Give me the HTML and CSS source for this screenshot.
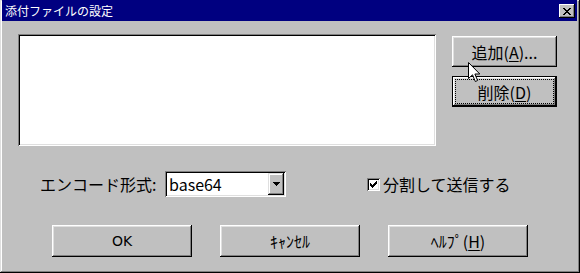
FILE: index.html
```html
<!DOCTYPE html>
<html lang="ja">
<head>
    <meta charset="UTF-8">
    <title>添付ファイルの設定</title>
    <link rel="stylesheet" href="styles.css">
</head>
<body>
    <div class="window">
        <div class="titlebar">
            <span class="title">添付ファイルの設定</span>
            <span class="close">
                <svg width="8" height="7" viewBox="0 0 8 7">
                    <path d="M0 0h2v1h1v1h2v-1h1v-1h2v1h-1v1h-1v1h-1v1h1v1h1v1h1v1h-2v-1h-1v-1h-2v1h-1v1h-2v-1h1v-1h1v-1h1v-1h-1v-1h-1v-1h-1z" fill="#000"/>
                </svg>
            </span>
        </div>

        <div class="content">
            <div class="top-row">
                <div class="listbox"></div>
                <div class="side-buttons">
                    <button class="btn side">追加(<u>A</u>)...</button>
                    <button class="btn side default"><span class="focus">削除(<u>D</u>)</span></button>
                </div>
            </div>

            <div class="option-row">
                <span class="enc-label">エンコード形式:</span>
                <div class="combo">
                    <span class="combo-value">base64</span>
                    <span class="combo-arrow">
                        <svg width="7" height="4" viewBox="0 0 7 4">
                            <path d="M0 0h7v1h-1v1h-1v1h-1v1h-1v-1h-1v-1h-1v-1h-1z" fill="#000"/>
                        </svg>
                    </span>
                </div>
                <span class="check">
                    <span class="checkbox">
                        <svg width="7" height="7" viewBox="0 0 7 7">
                            <path d="M6 0h1v3h-1v1h-1v1h-1v1h-1v1h-1v-1h-1v-1h-1v-3h1v1h1v1h1v-1h1v-1h1v-1h1z" fill="#000"/>
                        </svg>
                    </span>
                    分割して送信する
                </span>
            </div>

            <div class="bottom-row">
                <button class="btn wide latin">OK</button>
                <button class="btn wide">ｷｬﾝｾﾙ</button>
                <button class="btn wide">ﾍﾙﾌﾟ(<u>H</u>)</button>
            </div>
        </div>

        <svg class="cursor" width="13" height="21" viewBox="0 0 13 21">
            <path d="M0.5 0.5 L0.5 16.5 L4.5 12.8 L7.3 19.5 L9.6 18.5 L6.9 12 L11.8 12 Z" fill="#fff" stroke="#000" stroke-width="1"/>
        </svg>
    </div>
</body>
</html>
```

FILE: styles.css
```css
body {
    margin: 0;
    background: #c0c0c0;
    font-family: "Noto Sans CJK JP", "DejaVu Sans", sans-serif;
    font-size: 16px;
    color: #000;
}
.window {
    position: relative;
    width: 580px;
    height: 273px;
    box-sizing: border-box;
    background: #c0c0c0;
    box-shadow: inset -1px -1px #000, inset 1px 1px #dfdfdf,
                inset -2px -2px #808080, inset 2px 0 #fff;
    overflow: hidden;
}
.titlebar {
    height: 21px;
    margin: 0 3px 0 2px;
    background: #000080;
    display: flex;
    align-items: center;
    justify-content: space-between;
    padding: 0 0 0 3px;
}
.title {
    color: #fff;
    font-size: 12px;
    line-height: 1;
}
.close {
    width: 16px;
    height: 14px;
    margin-right: 2px;
    margin-top: 1px;
    background: #c0c0c0;
    box-shadow: inset -1px -1px #000, inset 1px 1px #fff, inset -2px -2px #808080;
    display: flex;
    align-items: center;
    justify-content: center;
}
.content {
    padding: 13px 0 0 18px;
}
.top-row {
    display: flex;
    height: 112px;
}
.listbox {
    width: 418px;
    height: 112px;
    background: #fff;
    box-shadow: inset 1px 1px #808080, inset -1px -1px #fff,
                inset 2px 2px #000, inset -2px -2px #dfdfdf;
}
.side-buttons {
    display: flex;
    flex-direction: column;
    gap: 9px;
    margin-left: 16px;
    padding-top: 2px;
}
.btn {
    font-family: inherit;
    font-size: 16px;
    line-height: 1;
    color: #000;
    background: #c0c0c0;
    border: none;
    padding: 0;
    box-shadow: inset -1px -1px #000, inset 1px 1px #fff,
                inset -2px -2px #808080, inset 2px 2px #dfdfdf;
    display: flex;
    align-items: center;
    justify-content: center;
}
.btn u {
    text-underline-offset: 2px;
}
.side {
    width: 105px;
    height: 31px;
}
.default {
    box-shadow: inset 0 0 0 1px #000, inset -2px -2px #000, inset 2px 2px #fff,
                inset -3px -3px #808080, inset 3px 3px #dfdfdf;
}
.focus {
    display: flex;
    align-items: center;
    justify-content: center;
    width: 97px;
    height: 23px;
    outline: 1px dotted #000;
}
.option-row {
    display: flex;
    align-items: center;
    height: 26px;
    margin-top: 25px;
    padding-left: 22px;
}
.enc-label {
    width: 125px;
}
.combo {
    width: 121px;
    height: 26px;
    box-sizing: border-box;
    background: #fff;
    box-shadow: inset 1px 1px #808080, inset -1px -1px #fff,
                inset 2px 2px #000, inset -2px -2px #dfdfdf;
    display: flex;
    align-items: center;
    justify-content: space-between;
    padding: 0 2px 0 4px;
}
.combo-arrow {
    width: 16px;
    height: 22px;
    background: #c0c0c0;
    box-shadow: inset -1px -1px #000, inset 1px 1px #dfdfdf,
                inset -2px -2px #808080, inset 2px 2px #fff;
    display: flex;
    align-items: center;
    justify-content: center;
}
.check {
    display: flex;
    align-items: center;
    gap: 3px;
    margin-left: 81px;
}
.checkbox {
    width: 13px;
    height: 13px;
    background: #fff;
    box-shadow: inset 1px 1px #808080, inset -1px -1px #fff,
                inset 2px 2px #000, inset -2px -2px #dfdfdf;
    display: flex;
    align-items: center;
    justify-content: center;
}
.bottom-row {
    display: flex;
    gap: 28px;
    margin-top: 28px;
    padding-left: 34px;
}
.wide {
    width: 140px;
    height: 32px;
}
.latin {
    font-family: "DejaVu Sans", sans-serif;
    font-size: 14px;
}
.cursor {
    position: absolute;
    left: 468px;
    top: 62px;
}
```
